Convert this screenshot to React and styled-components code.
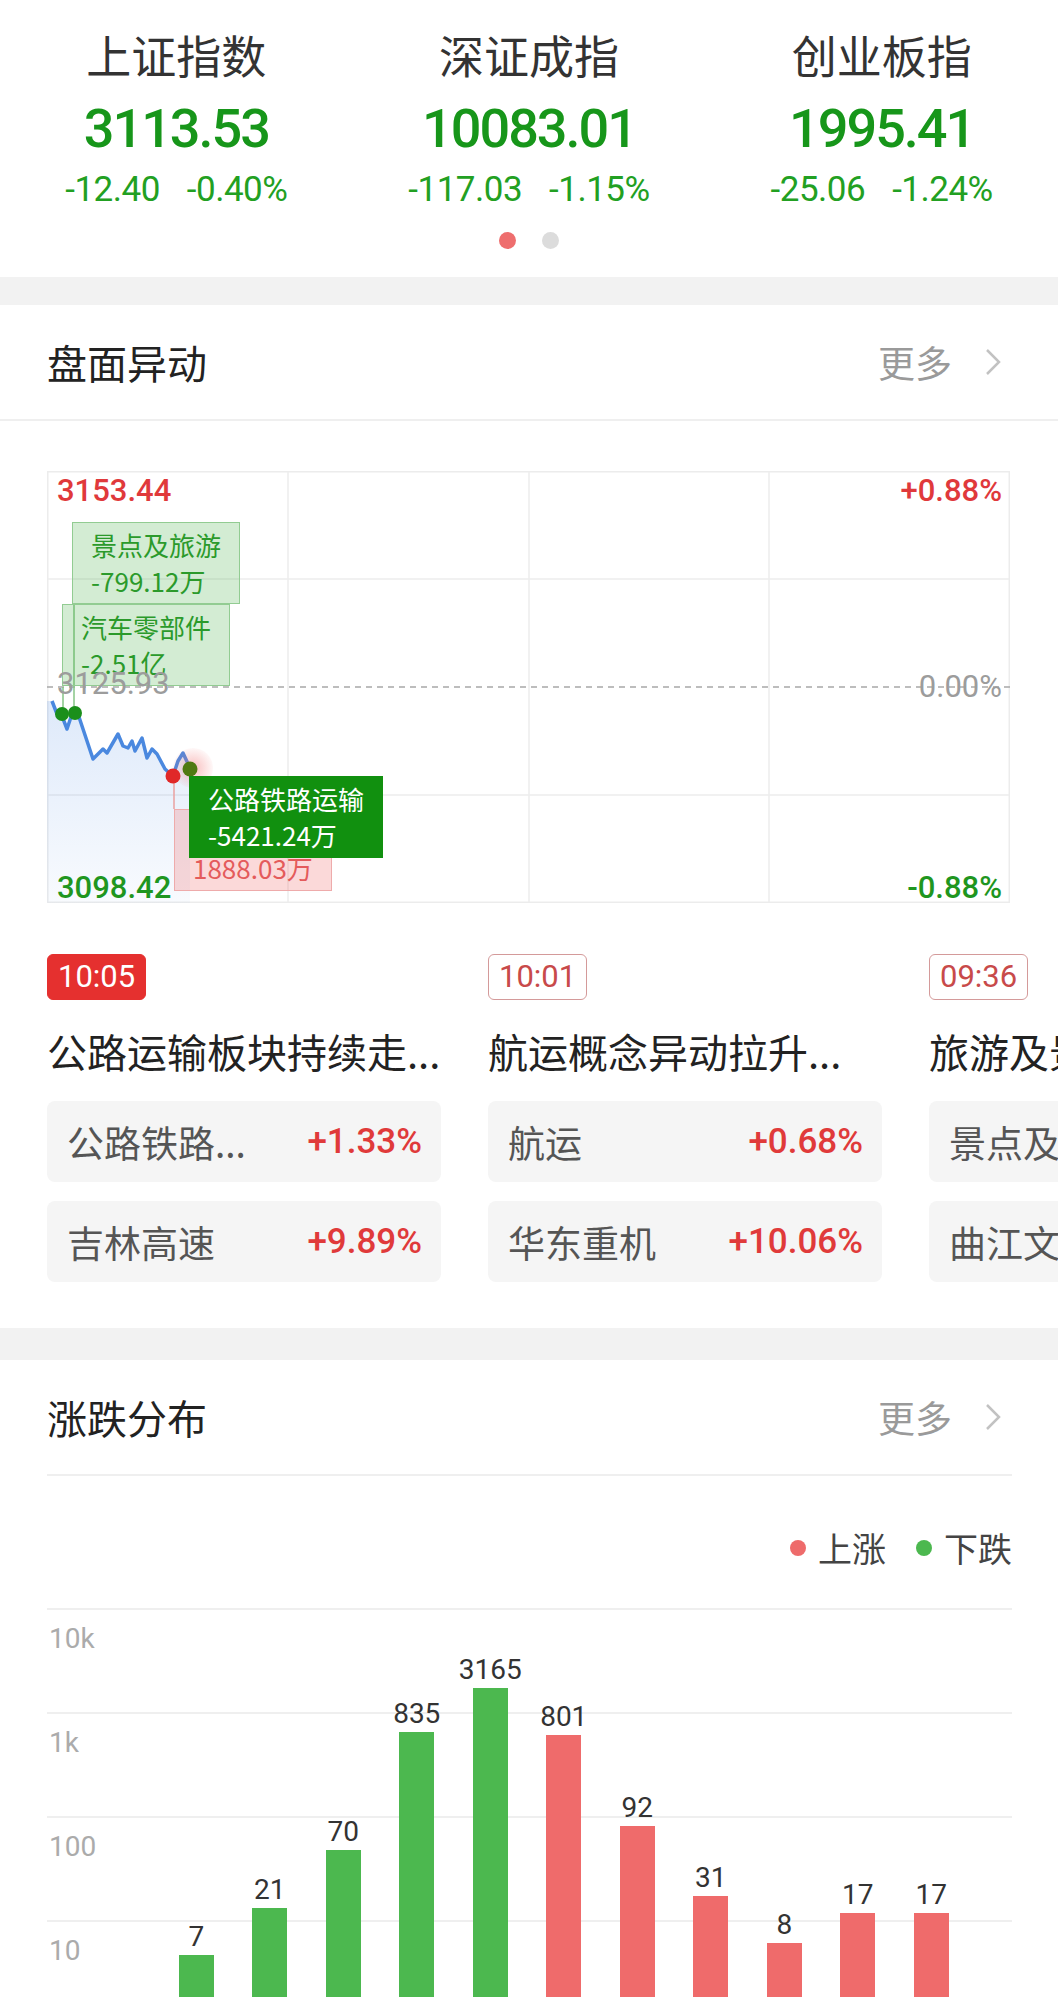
import React from "react"
import styled, { createGlobalStyle } from "styled-components"

const NUM = `Roboto, "Noto Sans", sans-serif`

const GlobalStyle = createGlobalStyle`
  body {
    margin: 0;
    background: #fff;
    font-family: "Noto Sans CJK SC", "Noto Sans", sans-serif;
    color: #222;
  }
`

const Page = styled.div`
  width: 100%;
  overflow: hidden;
  padding-bottom: 20px;
`

/* ---------- index strip ---------- */
const IndexPanel = styled.section`
  padding: 27px 0 28px;
`
const IndexGrid = styled.div`
  display: grid;
  grid-template-columns: repeat(3, 1fr);
`
const IndexCell = styled.div`
  display: flex;
  flex-direction: column;
  align-items: center;
`
const IndexName = styled.div`
  font-size: 45px;
  line-height: 56px;
  color: #333;
`
const IndexValue = styled.div`
  margin-top: 16px;
  font-family: ${NUM};
  font-weight: 500;
  font-size: 54px;
  line-height: 60px;
  letter-spacing: -2px;
  color: #17961a;
`
const IndexChange = styled.div`
  margin-top: 11px;
  display: flex;
  gap: 27px;
  font-family: ${NUM};
  font-size: 35px;
  line-height: 40px;
  letter-spacing: -0.5px;
  color: #22a022;
`
const Dots = styled.div`
  margin-top: 22px;
  display: flex;
  justify-content: center;
  gap: 26px;
`
const Dot = styled.span`
  width: 17px;
  height: 17px;
  border-radius: 50%;
  background: ${(p) => (p.$active ? "#ee6e6e" : "#dcdcdc")};
`

const Band = styled.div`
  height: ${(p) => p.$h}px;
  background: #f2f2f2;
`

/* ---------- section header ---------- */
const SectionHead = styled.header`
  height: 116px;
  box-sizing: border-box;
  display: flex;
  align-items: center;
  justify-content: space-between;
  border-bottom: 2px solid #efefef;
  margin: ${(p) => (p.$inset ? "0 46px 0 47px" : "0")};
  padding: ${(p) => (p.$inset ? "0 10px 0 0" : "0 56px 0 47px")};
`
const SectionTitle = styled.h2`
  margin: 0;
  font-size: 40px;
  font-weight: 400;
  line-height: 56px;
  color: #222;
`
const More = styled.span`
  display: flex;
  align-items: center;
  gap: 32px;
  font-size: 37px;
  color: #9a9a9a;
`

/* ---------- intraday chart ---------- */
const ChartBox = styled.div`
  position: relative;
  margin: 50px 48px 0 47px;
  height: 432px;
  svg {
    display: block;
  }
`
const AxisLabel = styled.span`
  position: absolute;
  top: ${(p) => p.$top}px;
  ${(p) => (p.$right ? "right: 8px;" : "left: 10px;")}
  font-family: ${NUM};
  font-size: 31px;
  line-height: 34px;
  font-weight: ${(p) => (p.$muted ? 400 : 500)};
  color: ${(p) => p.$color};
`
const tagLooks = {
  green: "background: rgba(70,175,70,0.24); border-color: #92cc92; color: #2b9a2b;",
  solid: "background: #11900f; border-color: #11900f; color: #fff;",
  red: "background: rgba(240,110,110,0.26); border-color: #eeabab; color: #e45b5b;",
}
const Tag = styled.div`
  position: absolute;
  left: ${(p) => p.$x}px;
  top: ${(p) => p.$y}px;
  padding: 4px 18px;
  border: 1.5px solid;
  font-size: 26px;
  line-height: 36px;
  white-space: nowrap;
  ${(p) => tagLooks[p.$look]}
`

/* ---------- news cards ---------- */
const NewsStrip = styled.div`
  display: flex;
  gap: 47px;
  padding: 51px 0 46px 47px;
  overflow: hidden;
`
const NewsCard = styled.div`
  flex: 0 0 394px;
  display: flex;
  flex-direction: column;
  align-items: flex-start;
`
const TimeBadge = styled.span`
  height: 46px;
  box-sizing: border-box;
  padding: 0 10px;
  border-radius: 6px;
  border: 1.5px solid ${(p) => (p.$hot ? "#e5302f" : "#d49a9a")};
  background: ${(p) => (p.$hot ? "#e5302f" : "#fff")};
  color: ${(p) => (p.$hot ? "#fff" : "#c84a4a")};
  font-family: ${NUM};
  font-size: 31px;
  line-height: 43px;
`
const NewsTitle = styled.div`
  margin-top: 23px;
  font-size: 40px;
  line-height: 56px;
  white-space: nowrap;
  color: #222;
`
const StockRows = styled.div`
  margin-top: 22px;
  align-self: stretch;
  display: flex;
  flex-direction: column;
  gap: 19px;
`
const StockRow = styled.div`
  height: 81px;
  display: flex;
  align-items: center;
  justify-content: space-between;
  padding: 0 19px 0 20px;
  background: #f5f5f5;
  border-radius: 8px;
  white-space: nowrap;
`
const StockName = styled.span`
  font-size: 37px;
  color: #555;
`
const StockPct = styled.span`
  font-family: ${NUM};
  font-weight: 500;
  font-size: 35px;
  color: #e03a3a;
`

/* ---------- distribution ---------- */
const Legend = styled.div`
  margin: 0 46px 0 47px;
  padding: 52px 0 40px;
  display: flex;
  justify-content: flex-end;
  align-items: center;
  gap: 30px;
`
const LegendItem = styled.span`
  display: flex;
  align-items: center;
  gap: 12px;
  font-size: 34px;
  line-height: 40px;
  color: #444;
  &::before {
    content: "";
    width: 16px;
    height: 16px;
    border-radius: 50%;
    background: ${(p) => p.$color};
  }
`
const DistChart = styled.div`
  margin: 0 46px 0 47px;
  height: 389px;
  display: grid;
  grid-template-rows: 389px;
  overflow: hidden;
`
const GridLayer = styled.div`
  grid-area: 1 / 1;
  display: flex;
  flex-direction: column;
  overflow: hidden;
`
const GridBand = styled.div`
  flex: 0 0 104px;
  box-sizing: border-box;
  border-top: 2px solid #efefef;
  padding: 13px 0 0 2px;
  font-family: ${NUM};
  font-size: 28px;
  line-height: 32px;
  color: #ababab;
`
const BarLayer = styled.div`
  grid-area: 1 / 1;
  display: flex;
  align-items: flex-end;
  padding-left: 39px;
`
const BarSlot = styled.div`
  flex: 0 0 73.5px;
  display: flex;
  flex-direction: column;
  align-items: center;
`
const BarValue = styled.span`
  margin-bottom: 3px;
  font-family: ${NUM};
  font-size: 28px;
  line-height: 30px;
  color: #333;
`
const Bar = styled.div`
  width: 35px;
  background: ${(p) => (p.$up ? "#ef6b6b" : "#4cb84f")};
`

const indices = [
  { name: "上证指数", value: "3113.53", chg: "-12.40", pct: "-0.40%" },
  { name: "深证成指", value: "10083.01", chg: "-117.03", pct: "-1.15%" },
  { name: "创业板指", value: "1995.41", chg: "-25.06", pct: "-1.24%" },
]

const news = [
  {
    time: "10:05",
    hot: true,
    title: "公路运输板块持续走...",
    rows: [
      ["公路铁路...", "+1.33%"],
      ["吉林高速", "+9.89%"],
    ],
  },
  {
    time: "10:01",
    title: "航运概念异动拉升...",
    rows: [
      ["航运", "+0.68%"],
      ["华东重机", "+10.06%"],
    ],
  },
  {
    time: "09:36",
    title: "旅游及景点板块走强...",
    rows: [
      ["景点及旅游", "+1.02%"],
      ["曲江文旅", "+6.18%"],
    ],
  },
]

// measured bar heights (px) on the log axis
const bars = [
  { v: null, h: 0 },
  { v: 7, h: 42 },
  { v: 21, h: 89 },
  { v: 70, h: 147 },
  { v: 835, h: 265 },
  { v: 3165, h: 309 },
  { v: 801, h: 262, up: true },
  { v: 92, h: 171, up: true },
  { v: 31, h: 101, up: true },
  { v: 8, h: 54, up: true },
  { v: 17, h: 84, up: true },
  { v: 17, h: 84, up: true },
]

const line = [
  [5, 230], [10, 243], [15, 245], [20, 258], [25, 243], [31, 243], [46, 288],
  [56, 278], [60, 282], [71, 263], [76, 275], [81, 277], [85, 270], [88, 280],
  [95, 267], [100, 287], [105, 278], [110, 283], [118, 298], [126, 305],
  [131, 290], [136, 282], [143, 297],
]

function Chevron() {
  return (
    <svg width="18" height="28" viewBox="0 0 18 28">
      <polyline points="3,2 15,14 3,26" fill="none" stroke="#c2c2c2" strokeWidth="2.5" />
    </svg>
  )
}

function IntradayChart() {
  const w = 963
  const h = 432
  const pts = line.map((p) => p.join(",")).join(" ")
  const area = `M0,230 L${pts.replace(/ /g, " L")} L143,${h} L0,${h} Z`
  return (
    <ChartBox>
      <svg width={w} height={h}>
        <defs>
          <linearGradient id="fill" x1="0" y1="0" x2="0" y2="1">
            <stop offset="0" stopColor="#5a93e6" stopOpacity="0.2" />
            <stop offset="1" stopColor="#5a93e6" stopOpacity="0.04" />
          </linearGradient>
          <radialGradient id="halo">
            <stop offset="0" stopColor="#f07070" stopOpacity="0.45" />
            <stop offset="1" stopColor="#f07070" stopOpacity="0.05" />
          </radialGradient>
        </defs>
        <rect x="0.75" y="0.75" width={w - 1.5} height={h - 1.5} fill="none" stroke="#ececec" strokeWidth="1.5" />
        {[241, 482, 722].map((x) => (
          <line key={x} x1={x} y1="0" x2={x} y2={h} stroke="#ececec" strokeWidth="1.5" />
        ))}
        {[108, 324].map((y) => (
          <line key={y} x1="0" y1={y} x2={w} y2={y} stroke="#ececec" strokeWidth="1.5" />
        ))}
        <path d={area} fill="url(#fill)" />
        <line x1="0" y1="216" x2={w} y2="216" stroke="#a8a8a8" strokeWidth="1.5" strokeDasharray="6 5" />
        <polyline points={pts} fill="none" stroke="#4a88df" strokeWidth="3.5" strokeLinejoin="round" />
        <line x1="27" y1="133" x2="27" y2="242" stroke="#86c486" strokeWidth="1.5" />
        <line x1="16" y1="216" x2="16" y2="243" stroke="#86c486" strokeWidth="1.5" />
        <line x1="127" y1="305" x2="127" y2="338" stroke="#eaa0a0" strokeWidth="1.5" />
        <circle cx="15" cy="243" r="7" fill="#1b8f1b" />
        <circle cx="28" cy="242" r="7" fill="#1b8f1b" />
        <circle cx="146" cy="297" r="20" fill="url(#halo)" />
        <circle cx="126" cy="305" r="7.5" fill="#e02828" />
        <circle cx="143" cy="298" r="7.5" fill="#4f7a12" />
      </svg>

      <Tag $look="green" $x={25} $y={51}>
        景点及旅游
        <br />
        -799.12万
      </Tag>
      <Tag $look="green" $x={15} $y={133}>
        汽车零部件
        <br />
        -2.51亿
      </Tag>
      <Tag $look="red" $x={127} $y={338}>
        航运
        <br />
        1888.03万
      </Tag>
      <Tag $look="solid" $x={142} $y={305}>
        公路铁路运输
        <br />
        -5421.24万
      </Tag>

      <AxisLabel $top={3} $color="#e0393b">3153.44</AxisLabel>
      <AxisLabel $top={196} $color="#9c9c9c" $muted>3125.93</AxisLabel>
      <AxisLabel $top={400} $color="#1f961f">3098.42</AxisLabel>
      <AxisLabel $right $top={3} $color="#e0393b">+0.88%</AxisLabel>
      <AxisLabel $right $top={199} $color="#9c9c9c" $muted>0.00%</AxisLabel>
      <AxisLabel $right $top={400} $color="#1f961f">-0.88%</AxisLabel>
    </ChartBox>
  )
}

export default function App() {
  return (
    <Page>
      <GlobalStyle />
      <IndexPanel>
        <IndexGrid>
          {indices.map((i) => (
            <IndexCell key={i.name}>
              <IndexName>{i.name}</IndexName>
              <IndexValue>{i.value}</IndexValue>
              <IndexChange>
                <span>{i.chg}</span>
                <span>{i.pct}</span>
              </IndexChange>
            </IndexCell>
          ))}
        </IndexGrid>
        <Dots>
          <Dot $active />
          <Dot />
        </Dots>
      </IndexPanel>

      <Band $h={28} />

      <SectionHead>
        <SectionTitle>盘面异动</SectionTitle>
        <More>
          更多
          <Chevron />
        </More>
      </SectionHead>

      <IntradayChart />

      <NewsStrip>
        {news.map((n) => (
          <NewsCard key={n.time}>
            <TimeBadge $hot={n.hot}>{n.time}</TimeBadge>
            <NewsTitle>{n.title}</NewsTitle>
            <StockRows>
              {n.rows.map(([name, pct]) => (
                <StockRow key={name}>
                  <StockName>{name}</StockName>
                  <StockPct>{pct}</StockPct>
                </StockRow>
              ))}
            </StockRows>
          </NewsCard>
        ))}
      </NewsStrip>

      <Band $h={32} />

      <SectionHead $inset>
        <SectionTitle>涨跌分布</SectionTitle>
        <More>
          更多
          <Chevron />
        </More>
      </SectionHead>

      <Legend>
        <LegendItem $color="#ee6b6b">上涨</LegendItem>
        <LegendItem $color="#4cb84f">下跌</LegendItem>
      </Legend>

      <DistChart>
        <GridLayer>
          {["10k", "1k", "100", "10"].map((t) => (
            <GridBand key={t}>{t}</GridBand>
          ))}
        </GridLayer>
        <BarLayer>
          {bars.map((b, i) => (
            <BarSlot key={i}>
              {b.v && <BarValue>{b.v}</BarValue>}
              <Bar $up={b.up} style={{ height: b.h }} />
            </BarSlot>
          ))}
        </BarLayer>
      </DistChart>
    </Page>
  )
}
